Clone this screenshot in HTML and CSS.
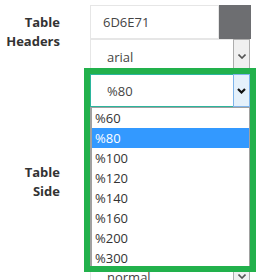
FILE: index.html
```html
<!DOCTYPE html>
<html>
<head>
    <meta charset="utf-8">
    <link rel="stylesheet" href="styles.css">
</head>
<body>

    <div class="settings">
        <!-- Table headers -->
        <div class="field">
            <div class="field-label">Table<br>Headers</div>
            <div class="field-controls">
                <div class="color-pick">
                    <input class="color-text" type="text" value="6D6E71" readonly>
                    <span class="swatch"></span>
                </div>
                <div class="select">
                    <span class="select-value">arial</span>
                    <span class="select-btn">
                        <svg width="8" height="5" viewBox="0 0 8 5"><polyline points="0.5,0.5 4,4 7.5,0.5" fill="none" stroke="#555" stroke-width="1.6"/></svg>
                    </span>
                </div>
                <div class="select select-open">
                    <span class="select-value">%80</span>
                    <span class="select-btn">
                        <svg width="9" height="6" viewBox="0 0 9 6"><polyline points="1,1 4.5,4.5 8,1" fill="none" stroke="#111" stroke-width="2.2"/></svg>
                    </span>
                    <ul class="options">
                        <li>%60</li>
                        <li class="active">%80</li>
                        <li>%100</li>
                        <li>%120</li>
                        <li>%140</li>
                        <li>%160</li>
                        <li>%200</li>
                        <li>%300</li>
                    </ul>
                </div>
            </div>
        </div>

        <!-- Table side (mostly under the open list) -->
        <div class="field">
            <div class="field-label">Table<br>Side</div>
            <div class="field-controls">
                <div class="color-pick">
                    <input class="color-text" type="text" readonly>
                    <span class="swatch swatch-light"></span>
                </div>
                <div class="select">
                    <span class="select-value"></span>
                    <span class="select-btn"></span>
                </div>
                <div class="select">
                    <span class="select-value"></span>
                    <span class="select-btn"></span>
                </div>
                <div class="select">
                    <span class="select-value">normal</span>
                    <span class="select-btn">
                        <svg width="8" height="5" viewBox="0 0 8 5"><polyline points="0.5,0.5 4,4 7.5,0.5" fill="none" stroke="#555" stroke-width="1.6"/></svg>
                    </span>
                </div>
            </div>
        </div>
    </div>

    <!-- highlight frame -->
    <div class="highlight"></div>

</body>
</html>
```

FILE: styles.css
```css
* {
    margin: 0;
    padding: 0;
    box-sizing: border-box;
}

body {
    font-family: 'Open Sans', sans-serif;
    background-color: #fff;
    color: #333;
    overflow: hidden;
    padding-top: 5px;
}

.settings {
    display: flex;
    flex-direction: column;
    gap: 48px;
}

.field {
    display: flex;
    gap: 30px;
}

.field-label {
    width: 60px;
    text-align: right;
    font-size: 13px;
    font-weight: 700;
    line-height: 19px;
    padding-top: 8px;
    color: #333;
}

.field-controls {
    width: 161px;
    display: flex;
    flex-direction: column;
}

.color-pick {
    display: flex;
    height: 34px;
}

.color-text {
    width: 129px;
    height: 34px;
    border: 1px solid #e6e6e6;
    padding-left: 12px;
    font-family: 'Open Sans', sans-serif;
    font-size: 13px;
    color: #444;
    outline: none;
}

.swatch {
    width: 32px;
    background-color: #6D6E71;
}

.swatch-light {
    background-color: #F2F2F2;
}

/* Select boxes */
.select {
    position: relative;
    width: 160px;
    height: 35px;
    display: flex;
    align-items: center;
    border: 1px solid #e6e6e6;
    border-right: none;
    background-color: #fff;
    font-size: 13px;
    color: #444;
}

.select-value {
    flex: 1;
    padding-left: 16px;
}

.select-btn {
    width: 17px;
    align-self: stretch;
    display: flex;
    justify-content: center;
    align-items: center;
    background-color: #f0f0f0;
    border: 1px solid #adadad;
    margin-top: -1px;
    margin-bottom: -1px;
}

.select-open {
    height: 33px;
    border: 1px solid #2bb59c;
    border-right: none;
}

.select-open .select-btn {
    background-color: #e5f1fb;
    border-color: #7eb4ea;
}

/* Open dropdown list */
.options {
    position: absolute;
    top: 32px;
    left: -1px;
    width: 160px;
    list-style: none;
    background-color: #fff;
    border: 1px solid #a0a0a0;
    border-left-width: 2px;
    z-index: 2;
}

.options li {
    height: 20px;
    line-height: 20px;
    padding-left: 3px;
    font-size: 13px;
    color: #333;
}

.options li.active {
    background-color: #3399ff;
    color: #fff;
}

.highlight {
    position: absolute;
    left: 84px;
    top: 68px;
    width: 172px;
    height: 204px;
    border: 6px solid #22b14c;
    z-index: 3;
    pointer-events: none;
}
```
